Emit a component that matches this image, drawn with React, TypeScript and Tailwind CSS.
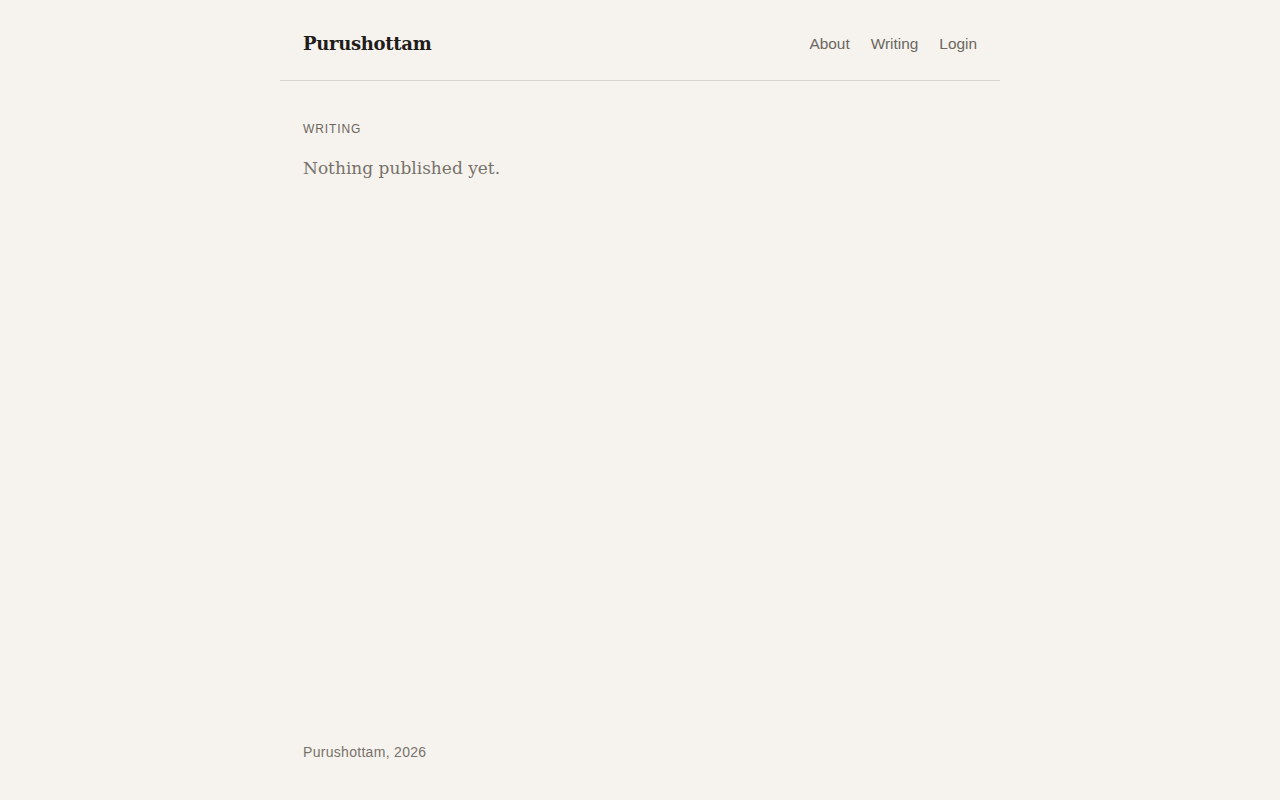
const serif = "font-['DejaVu_Serif','Liberation_Serif',serif]";
const sans = "font-['Liberation_Sans',Arial,sans-serif]";

export default function App() {
  return (
    <div className="min-h-screen bg-[#f6f3ee] flex flex-col">
      <div className="w-[720px] mx-auto flex-1 flex flex-col">
        <header className="h-[81px] pt-[7px] flex items-center justify-between px-[23px] border-b border-[#d8d4ce]">
          <a className={`${serif} text-[18px] font-bold text-[#1f1d1a] tracking-[-0.3px]`}>
            Purushottam
          </a>
          <nav className={`${sans} flex items-center gap-[21px] text-[15.4px] pt-[1px] text-[#6b6660]`}>
            <a>About</a>
            <a>Writing</a>
            <a>Login</a>
          </nav>
        </header>

        <main className="flex-1 px-[23px] pt-[39px]">
          <h2 className={`${sans} text-[12px] uppercase tracking-[0.9px] text-[#6b6660]`}>
            Writing
          </h2>
          <p className={`${serif} mt-[18px] text-[17px] text-[#77726b]`}>
            Nothing published yet.
          </p>
        </main>

        <footer className={`${sans} px-[23px] pb-[37px] text-[14px] tracking-[0.3px] text-[#77726b]`}>
          Purushottam, 2026
        </footer>
      </div>
    </div>
  );
}
